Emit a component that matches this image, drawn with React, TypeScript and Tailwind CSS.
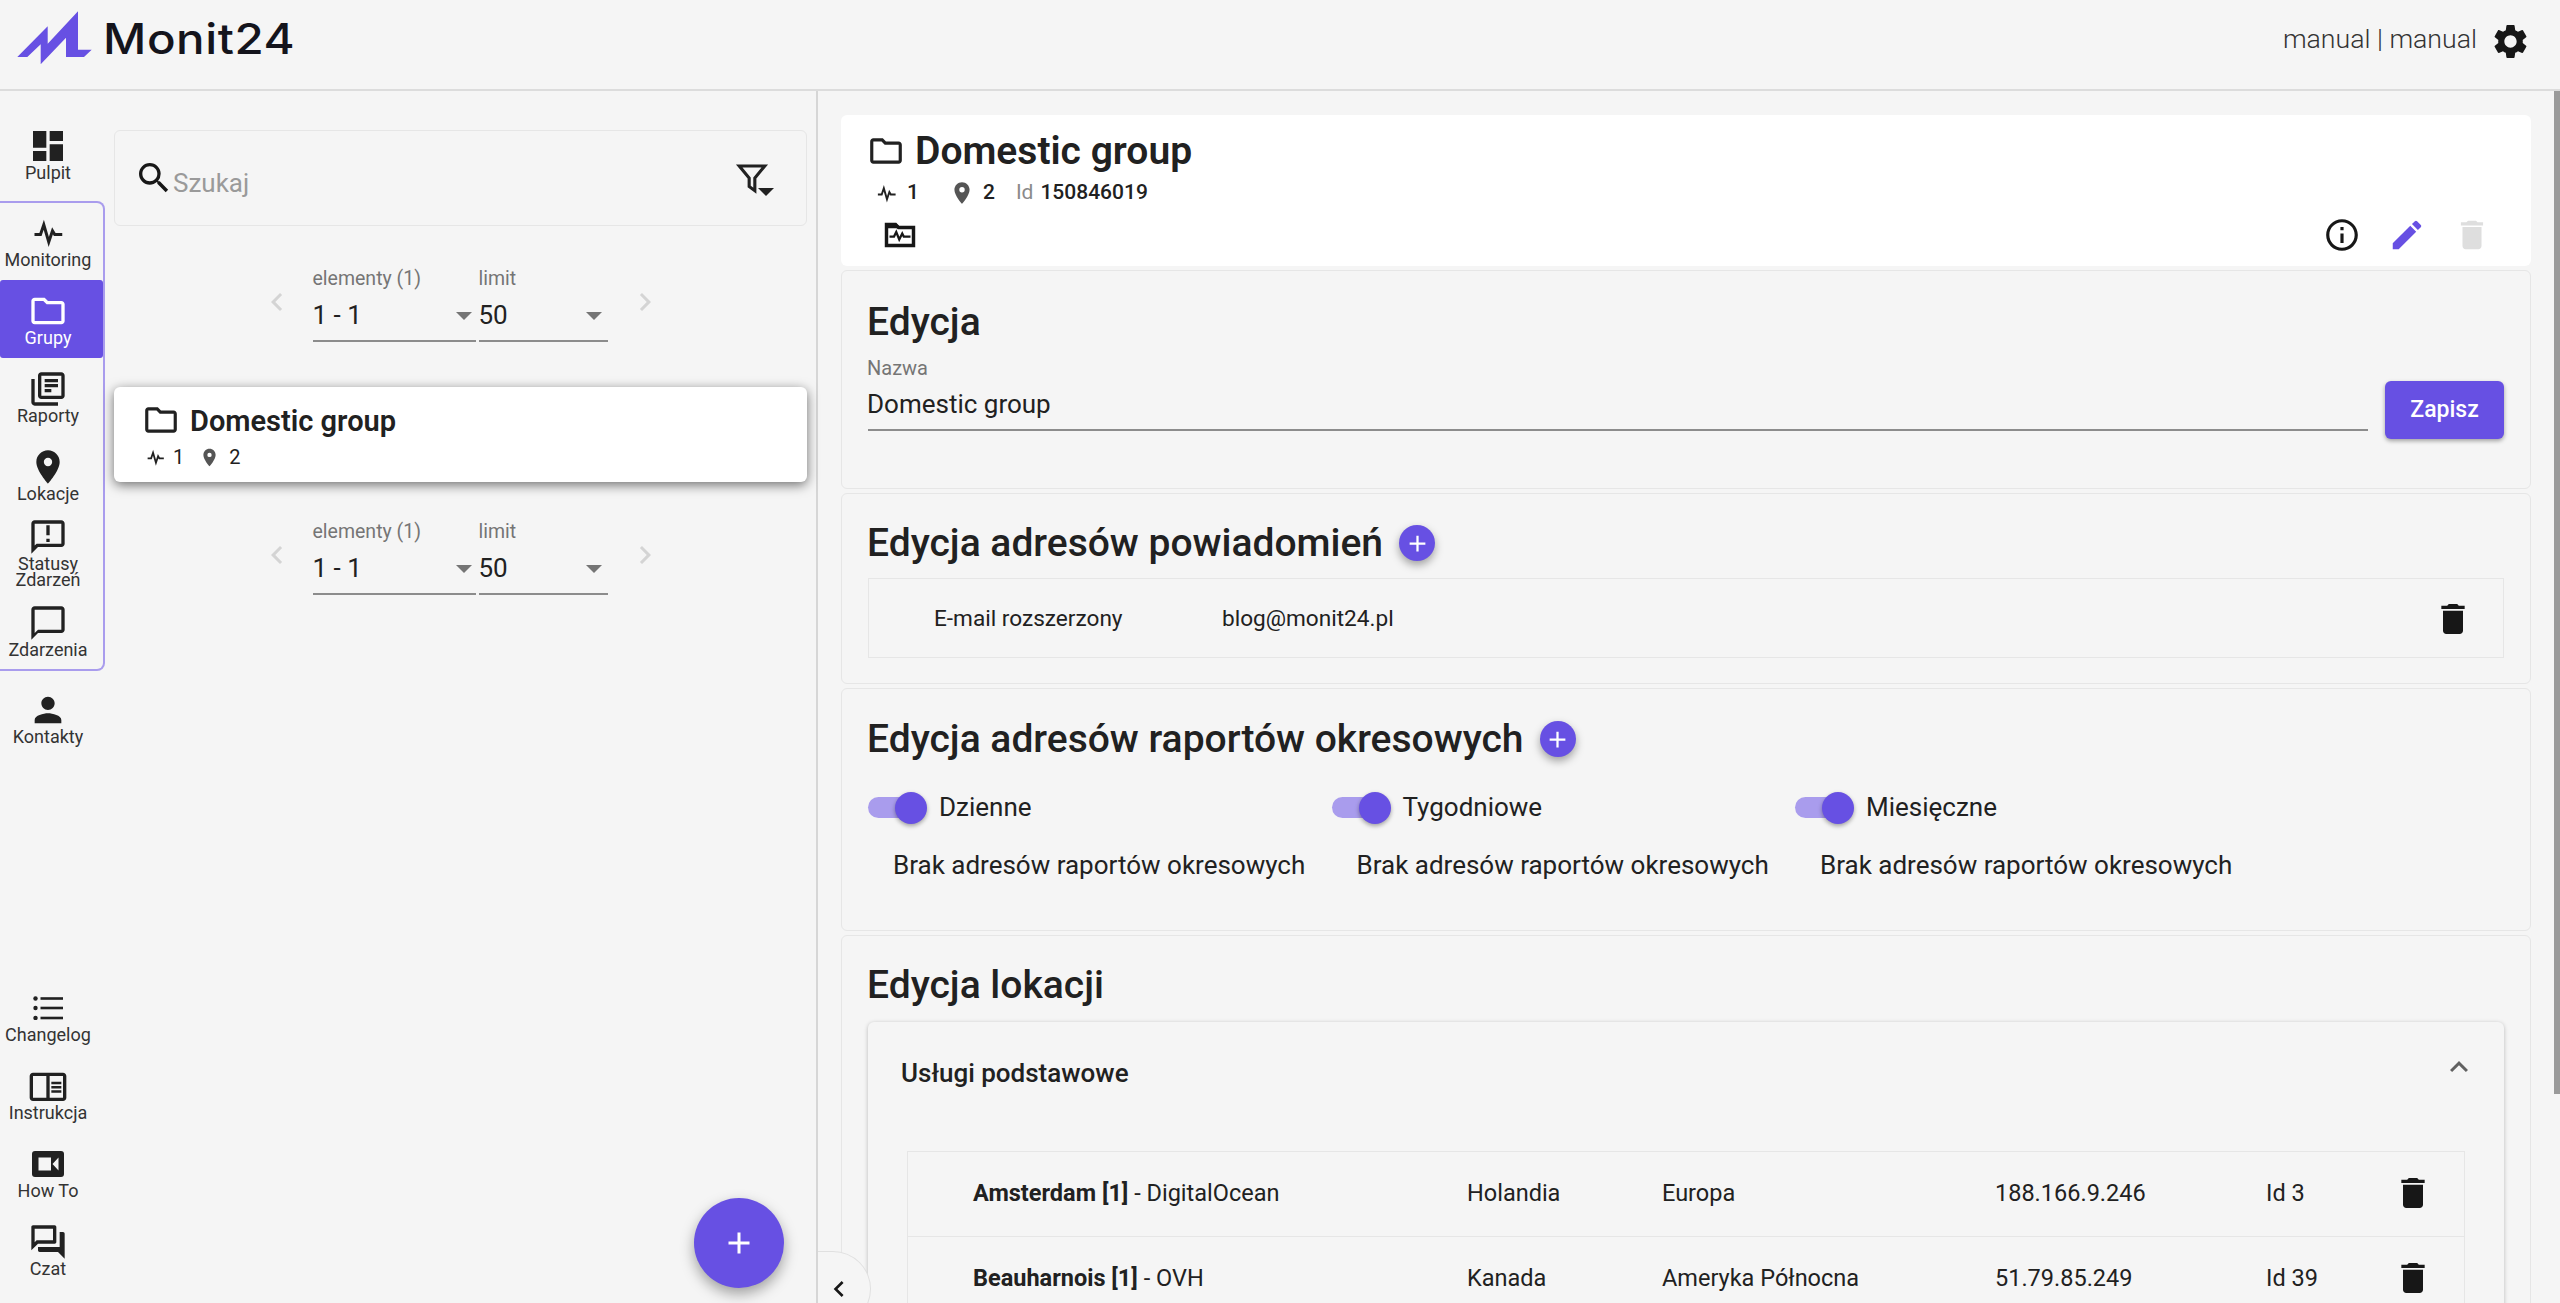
import { ReactNode } from 'react';
import {
  MdAdd,
  MdChatBubbleOutline,
  MdChevronLeft,
  MdChevronRight,
  MdDashboard,
  MdDelete,
  MdEdit,
  MdExpandLess,
  MdInfoOutline,
  MdLocationOn,
  MdOutlineAnnouncement,
  MdOutlineChromeReaderMode,
  MdOutlineFolder,
  MdOutlineLibraryBooks,
  MdOutlineQuestionAnswer,
  MdPerson,
  MdSearch,
  MdSettings,
} from 'react-icons/md';

const PulseIcon = ({ className }: { className?: string }) => (
  <svg viewBox="0 0 24 24" fill="none" stroke="currentColor" strokeWidth="2" className={className}>
    <path d="M3 13h4l2.2-6.5 3.3 11.5 2.5-7.5 1.5 2.5h5" />
  </svg>
);

const Logo = () => (
  <svg viewBox="0 0 100 65" className="h-[65px] w-[100px] shrink-0">
    <polygon
      fill="#6750e3"
      points="7.3,50 37.7,19.3 37.7,36.7 68,4.3 68,42.7 81.7,42.7 74,50 56,50 56,30.7 30.7,57.3 30.7,37.3 17.3,50"
    />
  </svg>
);

const ListIcon = () => (
  <svg viewBox="0 0 30 24" className="h-[24px] w-[30px]" fill="#212121">
    <circle cx="2.5" cy="2.5" r="2.2" />
    <circle cx="2.5" cy="12" r="2.2" />
    <circle cx="2.5" cy="22" r="2.2" />
    <rect x="7.5" y="1.2" width="22.5" height="2.6" />
    <rect x="7.5" y="10.7" width="22.5" height="2.6" />
    <rect x="7.5" y="20.7" width="22.5" height="2.6" />
  </svg>
);

const CameraIcon = () => (
  <svg viewBox="0 0 32 26" className="h-[26px] w-[32px]">
    <rect width="32" height="26" rx="3" fill="#212121" />
    <path d="M6.5 6.5h12.5v13H6.5z M20.5 13l6-6.5v13z" fill="#f5f5f5" />
  </svg>
);

const NavItem = ({ icon, label }: { icon: ReactNode; label: ReactNode }) => (
  <div className="flex h-[78px] w-[96px] flex-col items-center justify-center text-[#212121]">
    <div className="flex h-9 items-center justify-center text-[40px]">{icon}</div>
    <div className="mt-[1px] text-center text-[18px] leading-[16px] text-[#333333]">{label}</div>
  </div>
);

const Pagination = () => (
  <div className="flex h-[74px] items-center justify-center">
    <MdChevronLeft className="-mt-[6px] text-[36px] text-[#d4d4d4]" />
    <div className="ml-[18px] w-[163px]">
      <div className="text-[19.5px] leading-[22px] text-[#757575]">elementy (1)</div>
      <div className="mt-[3px] flex h-[49px] items-center justify-between border-b-2 border-[#8c8c8c] pb-[2px] text-[26px] text-[#212121]">
        <span>1 - 1</span>
        <span className="mr-[4px] h-0 w-0 border-x-[8px] border-t-[8px] border-x-transparent border-t-[#757575]" />
      </div>
    </div>
    <div className="ml-[3px] w-[129px]">
      <div className="text-[19.5px] leading-[22px] text-[#757575]">limit</div>
      <div className="mt-[3px] flex h-[49px] items-center justify-between border-b-2 border-[#8c8c8c] pb-[2px] text-[26px] text-[#212121]">
        <span>50</span>
        <span className="mr-[6px] h-0 w-0 border-x-[8px] border-t-[8px] border-x-transparent border-t-[#757575]" />
      </div>
    </div>
    <MdChevronRight className="-mt-[6px] ml-[19px] text-[36px] text-[#d4d4d4]" />
  </div>
);

const AddButton = () => (
  <div className="ml-[16px] flex h-9 w-9 items-center justify-center rounded-full bg-[#6750e3] text-[27px] text-white shadow-[0_4px_8px_rgba(0,0,0,0.35)]">
    <MdAdd />
  </div>
);

const Card = ({ className, children }: { className: string; children: ReactNode }) => (
  <section className={`rounded-[6px] border border-[#e6e6e6] px-[26px] ${className}`}>{children}</section>
);

const SwitchBlock = ({ label }: { label: string }) => (
  <div className="w-[463.5px]">
    <div className="flex h-[38px] items-center">
      <div className="relative h-[21px] w-[59px]">
        <div className="absolute left-0 top-0 h-[21px] w-[50px] rounded-full bg-[#a99ced]" />
        <div className="absolute -top-[5px] right-0 h-[32px] w-[32px] rounded-full bg-[#6750e3] shadow-[0_2px_4px_rgba(0,0,0,0.35)]" />
      </div>
      <span className="ml-[12px] text-[26px] text-[#212121]">{label}</span>
    </div>
    <div className="ml-[25px] mt-[21px] whitespace-nowrap text-[26px] leading-[36px] text-[#212121]">Brak adresów raportów okresowych</div>
  </div>
);

const LocationRow = ({ name, provider, country, region, ip, id }: { name: string; provider: string; country: string; region: string; ip: string; id: string }) => (
  <div className="flex h-[85px] items-center border-b border-[#e6e6e6] pl-[65px] text-[23.5px] text-[#212121]">
    <div className="w-[494px]">
      <span className="font-bold">{name}</span> - {provider}
    </div>
    <div className="w-[195px]">{country}</div>
    <div className="w-[333px]">{region}</div>
    <div className="w-[271px]">{ip}</div>
    <div className="w-[127px]">{id}</div>
    <MdDelete className="-mt-[3px] text-[40px] text-[#171717]" />
  </div>
);

export default function App() {
  return (
    <div className="flex h-screen flex-col overflow-hidden bg-[#f5f5f5] font-['Roboto',sans-serif] text-[#212121]">
      <header className="flex h-[91px] shrink-0 items-center justify-between border-b-2 border-[#dcdcdc] pl-[10px] pr-[29px]">
        <div className="-mt-[11px] flex items-center">
          <Logo />
          <span className="-ml-[7px] inline-block origin-left scale-x-[1.13] font-['Inter',sans-serif] text-[42px] font-medium leading-none tracking-[0.5px] text-[#14141c]">Monit24</span>
        </div>
        <div className="-mt-[7px] flex items-center">
          <span className="-mt-[4px] text-[26.7px] font-light text-[#333333]">manual | manual</span>
          <MdSettings className="ml-[13px] text-[41px] text-[#171717]" />
        </div>
      </header>

      <div className="flex min-h-0 flex-1">
        <nav className="flex w-[114px] shrink-0 flex-col justify-between pb-[14px] pt-[24px]">
          <div>
            <NavItem icon={<MdDashboard />} label="Pulpit" />
            <div className="mt-[8px] w-[105px] rounded-r-[8px] border-y-2 border-r-2 border-[#a99ced]">
              <div className="-my-[1px]">
                <NavItem icon={<PulseIcon className="h-9 w-9" />} label="Monitoring" />
                <div className="flex h-[78px] w-[103px] flex-col items-center justify-center rounded-[3px] bg-[#6750e3] pr-[7px] text-white">
                  <div className="flex h-9 items-center text-[40px]">
                    <MdOutlineFolder />
                  </div>
                  <div className="mt-[1px] text-[18px] leading-[16px]">Grupy</div>
                </div>
                <NavItem icon={<MdOutlineLibraryBooks />} label="Raporty" />
                <NavItem icon={<MdLocationOn />} label="Lokacje" />
                <NavItem icon={<MdOutlineAnnouncement />} label={<>Statusy<br />Zdarzeń</>} />
                <NavItem icon={<MdChatBubbleOutline />} label="Zdarzenia" />
              </div>
            </div>
            <div className="mt-[8px]">
              <NavItem icon={<MdPerson />} label="Kontakty" />
            </div>
          </div>
          <div>
            <NavItem icon={<ListIcon />} label="Changelog" />
            <NavItem icon={<MdOutlineChromeReaderMode />} label="Instrukcja" />
            <NavItem icon={<CameraIcon />} label="How To" />
            <NavItem icon={<MdOutlineQuestionAnswer />} label="Czat" />
          </div>
        </nav>

        <div className="relative w-[704px] shrink-0 border-r-2 border-[#d6d6d6] pr-[9px] pt-[39px]">
          <div className="flex h-[96px] items-center justify-between rounded-[6px] border border-[#e6e6e6] pl-[19px] pr-[30px]">
            <div className="flex items-center">
              <MdSearch className="text-[40px] text-[#171717]" />
              <span className="-ml-[1px] mt-[11px] text-[26px] text-[#9a9a9a]">Szukaj</span>
            </div>
            <div className="relative mt-[2px] h-[36px] w-[40px]">
              <svg viewBox="0 0 24 24" fill="none" stroke="#212121" strokeWidth="2.2" className="-ml-[1px] h-[34px] w-[34px]">
                <path d="M3 3.5h18l-7 8.5v9l-4-3v-6z" />
              </svg>
              <span className="absolute bottom-[1px] right-[2px] h-0 w-0 border-x-[8px] border-t-[8px] border-x-transparent border-t-[#212121]" />
            </div>
          </div>

          <div className="mt-[42px]">
            <Pagination />
          </div>

          <div className="mt-[45px] h-[95px] rounded-[6px] bg-white pl-[28px] pt-[14px] shadow-[0_3px_12px_rgba(0,0,0,0.55)]">
            <div className="flex h-[38px] items-center">
              <MdOutlineFolder className="text-[38px] text-[#212121]" />
              <span className="ml-[10px] mt-[3px] text-[29px] font-semibold">Domestic group</span>
            </div>
            <div className="mt-[6px] flex h-[24px] items-center pl-[3px] text-[20px]">
              <PulseIcon className="h-[21px] w-[21px]" />
              <span className="ml-[7px]">1</span>
              <MdLocationOn className="ml-[15px] text-[21px] text-[#555555]" />
              <span className="ml-[9px]">2</span>
            </div>
          </div>

          <div className="mt-[39px]">
            <Pagination />
          </div>

          <div className="absolute bottom-[15px] right-[32px] flex h-[90px] w-[90px] items-center justify-center rounded-full bg-[#6750e3] text-[36px] text-white shadow-[0_6px_14px_rgba(0,0,0,0.35)]">
            <MdAdd />
          </div>
        </div>

        <main className="relative min-w-0 flex-1 overflow-hidden pl-[23px] pr-[29px] pt-[24px]">
          <div className="absolute bottom-[-24px] left-0 z-10 flex h-[76px] w-[53px] items-start rounded-r-full border border-l-0 border-[#e0e0e0] bg-[#f5f5f5] pl-[5px] pt-[21px] text-[32px] text-[#171717]">
            <MdChevronLeft />
          </div>
          <div className="absolute right-0 top-0 h-[1003px] w-[6px] bg-[#9a9a9a]" />

          <section className="h-[151px] rounded-[6px] bg-white pl-[26px] pr-[40px] pt-[18px]">
            <div className="flex h-[36px] items-center">
              <MdOutlineFolder className="text-[38px] text-[#212121]" />
              <span className="ml-[10px] text-[39px] font-semibold leading-none">Domestic group</span>
            </div>
            <div className="mt-[12px] flex h-[24px] items-center pl-[8px] text-[21px] font-medium">
              <PulseIcon className="h-[23px] w-[23px]" />
              <span className="ml-[9px]">1</span>
              <MdLocationOn className="ml-[30px] text-[26px] text-[#555555]" />
              <span className="ml-[8px]">2</span>
              <span className="ml-[21px] font-normal text-[#8a8a8a]">Id</span>
              <span className="ml-[7px]">150846019</span>
            </div>
            <div className="mt-[11px] flex items-center justify-between">
              <svg viewBox="0 0 24 24" className="ml-[15px] h-[36px] w-[36px]" fill="none" stroke="#171717" strokeWidth="2.3">
                <path d="M3 5h6l2 2h10v12H3z" />
                <path d="M3 4.5h6l2.5 2.5H3z" fill="#171717" strokeWidth="1" />
                <path d="M5 13h3l1.5-3 2 5 2-4 1 2h4.5" strokeWidth="1.5" />
              </svg>
              <div className="flex items-center gap-[27px]">
                <MdInfoOutline className="text-[38px] text-[#171717]" />
                <MdEdit className="text-[38px] text-[#6750e3]" />
                <MdDelete className="text-[38px] text-[#dedede]" />
              </div>
            </div>
          </section>

          <Card className="mt-[4px] h-[219px] pt-[24px]">
            <h2 className="-ml-[1px] text-[39px] font-medium leading-[54px]">Edycja</h2>
            <div className="mt-[7px] flex items-start">
              <div className="flex-1">
                <div className="-ml-[1px] text-[20px] leading-[24px] text-[#757575]">Nazwa</div>
                <div className="flex h-[51px] items-center border-b-2 border-[#8c8c8c] text-[26px]">
                  <span className="-ml-[1px]">Domestic group</span>
                </div>
              </div>
              <div className="ml-[17px] mt-[25px] flex h-[58px] w-[119px] items-center justify-center rounded-[6px] bg-[#6750e3] text-[23px] font-medium text-white shadow-[0_2px_4px_rgba(0,0,0,0.35)]">
                Zapisz
              </div>
            </div>
          </Card>

          <Card className="mt-[4px] h-[191px] pt-[22px]">
            <div className="flex h-[54px] items-center">
              <h2 className="-ml-[1px] text-[39px] font-medium">Edycja adresów powiadomień</h2>
              <AddButton />
            </div>
            <div className="mt-[8px] flex h-[80px] items-center border border-[#e6e6e6] pl-[65px] pr-[30px] pt-[2px] text-[22.6px]">
              <span className="w-[288px]">E-mail rozszerzony</span>
              <span className="flex-1">blog@monit24.pl</span>
              <MdDelete className="text-[40px] text-[#171717]" />
            </div>
          </Card>

          <Card className="mt-[4px] h-[243px] pt-[23px]">
            <div className="flex h-[54px] items-center">
              <h2 className="-ml-[1px] text-[39px] font-medium">Edycja adresów raportów okresowych</h2>
              <AddButton />
            </div>
            <div className="mt-[22px] flex">
              <SwitchBlock label="Dzienne" />
              <SwitchBlock label="Tygodniowe" />
              <SwitchBlock label="Miesięczne" />
            </div>
          </Card>

          <Card className="mt-[4px] h-[500px] pt-[22px]">
            <h2 className="-ml-[1px] text-[39px] font-medium leading-[54px]">Edycja lokacji</h2>
            <div className="mt-[10px] rounded-[6px] px-[32px] shadow-[0_1px_4px_rgba(0,0,0,0.25)]">
              <div className="flex h-[100px] items-center justify-between pl-[1px] pt-[2px]">
                <span className="text-[26px] font-medium">Usługi podstawowe</span>
                <MdExpandLess className="-mr-[5px] -mt-[12px] text-[36px] text-[#616161]" />
              </div>
              <div className="mx-[7px] mt-[29px] border-x border-t border-[#e6e6e6]">
                <LocationRow name="Amsterdam [1]" provider="DigitalOcean" country="Holandia" region="Europa" ip="188.166.9.246" id="Id 3" />
                <LocationRow name="Beauharnois [1]" provider="OVH" country="Kanada" region="Ameryka Północna" ip="51.79.85.249" id="Id 39" />
              </div>
            </div>
          </Card>
        </main>
      </div>
    </div>
  );
}
